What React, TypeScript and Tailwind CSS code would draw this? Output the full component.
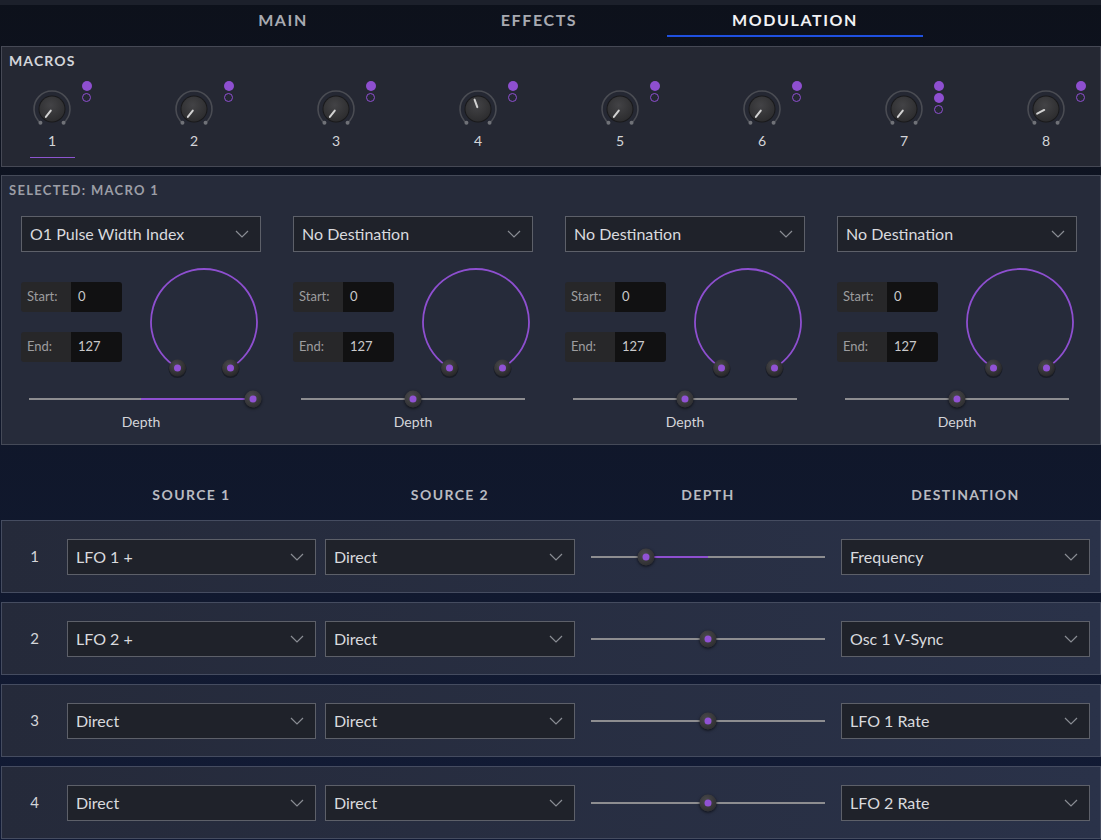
import React from 'react'

const MACRO_ANGLES: number[] = [-142, -142, -142, -20, -142, -142, -142, -118]
const MACRO_FILLED: number[] = [1, 1, 1, 1, 1, 1, 2, 1]

const SELECTED_COLUMNS = [
  { dest: 'O1 Pulse Width Index', depth: 100 },
  { dest: 'No Destination', depth: 50 },
  { dest: 'No Destination', depth: 50 },
  { dest: 'No Destination', depth: 50 },
]

const MOD_ROWS = [
  { src1: 'LFO 1 +', src2: 'Direct', depth: 23.5, dest: 'Frequency' },
  { src1: 'LFO 2 +', src2: 'Direct', depth: 50, dest: 'Osc 1 V-Sync' },
  { src1: 'Direct', src2: 'Direct', depth: 50, dest: 'LFO 1 Rate' },
  { src1: 'Direct', src2: 'Direct', depth: 50, dest: 'LFO 2 Rate' },
]

const polar = (cx: number, cy: number, deg: number, r: number) => {
  const t = (deg * Math.PI) / 180
  return [cx + r * Math.sin(t), cy - r * Math.cos(t)]
}

function Chevron() {
  return (
    <svg width="14" height="8" viewBox="0 0 14 8" fill="none">
      <path d="M1 1l6 6 6-6" stroke="#8a8d94" strokeWidth="1.2" />
    </svg>
  )
}

function Dropdown({ label, className = '' }: { label: string; className?: string }) {
  return (
    <div
      className={`flex h-[36px] shrink-0 items-center justify-between border border-[#5d6069] bg-[#1f222a] pl-[8px] pr-[11px] text-[16px] text-[#d9dade] ${className}`}
    >
      <span>{label}</span>
      <Chevron />
    </div>
  )
}

function MacroKnob({ angle }: { angle: number }) {
  const cx = 23
  const cy = 20
  const [sx, sy] = polar(cx, cy, -140, 18)
  const [ex, ey] = polar(cx, cy, 140, 18)
  const [ax, ay] = polar(cx, cy, angle, 2)
  const [bx, by] = polar(cx, cy, angle, 10)
  return (
    <svg width="46" height="38" viewBox="0 0 46 38">
      <defs>
        <radialGradient id="knobBody" cx="45%" cy="35%" r="70%">
          <stop offset="0%" stopColor="#434346" />
          <stop offset="100%" stopColor="#2b2b2d" />
        </radialGradient>
      </defs>
      <path d={`M${sx} ${sy} A18 18 0 1 1 ${ex} ${ey}`} fill="none" stroke="#4a4c53" strokeWidth="1.6" />
      <circle cx={sx} cy={sy} r="2" fill="#707278" />
      <circle cx={ex} cy={ey} r="2" fill="#707278" />
      <circle cx={cx} cy={cy} r="13.5" fill="#19191b" />
      <circle cx={cx} cy={cy} r="12.5" fill="url(#knobBody)" />
      <line x1={ax} y1={ay} x2={bx} y2={by} stroke="#d2d2d2" strokeWidth="2" strokeLinecap="round" />
    </svg>
  )
}

function Thumb({ left }: { left: string }) {
  return (
    <div
      className="absolute top-1/2 flex h-[17px] w-[17px] -translate-x-1/2 -translate-y-1/2 items-center justify-center rounded-full bg-[radial-gradient(circle_at_40%_35%,#4a4a4d,#262628)] shadow-[0_1px_3px_rgba(0,0,0,0.7)]"
      style={{ left }}
    >
      <div className="h-[7px] w-[7px] rounded-full bg-[#9052d4]" />
    </div>
  )
}

function Slider({ value, className = '' }: { value: number; className?: string }) {
  const lo = Math.min(50, value)
  const hi = Math.max(50, value)
  return (
    <div className={`relative h-[18px] shrink-0 ${className}`}>
      <div className="absolute left-0 right-0 top-[8px] h-[2px] bg-[#8d8d90]" />
      <div className="absolute top-[8px] h-[2px] bg-[#8e4fd0]" style={{ left: `${lo}%`, width: `${hi - lo}%` }} />
      <Thumb left={`${value}%`} />
    </div>
  )
}

function RangeRing() {
  const cx = 56
  const cy = 58
  const [sx, sy] = polar(cx, cy, -150, 53)
  const [ex, ey] = polar(cx, cy, 150, 53)
  const handle = (x: number, y: number) => (
    <g>
      <circle cx={x} cy={y + 1.2} r="9" fill="#000" opacity="0.35" />
      <circle cx={x} cy={y} r="8.5" fill="url(#ringHandle)" />
      <circle cx={x} cy={y} r="3.5" fill="#9052d4" />
    </g>
  )
  return (
    <svg width="112" height="116" viewBox="0 0 112 116" className="ml-[26px] shrink-0">
      <defs>
        <radialGradient id="ringHandle" cx="40%" cy="35%" r="70%">
          <stop offset="0%" stopColor="#4a4a4d" />
          <stop offset="100%" stopColor="#262628" />
        </radialGradient>
      </defs>
      <path d={`M${sx} ${sy} A53 53 0 1 1 ${ex} ${ey}`} fill="none" stroke="#8e4fd0" strokeWidth="1.8" />
      {handle(sx, sy)}
      {handle(ex, ey)}
    </svg>
  )
}

function RangeBox({ label, value }: { label: string; value: string }) {
  return (
    <div className="flex h-[30px] w-[101px] overflow-hidden rounded-[3px] text-[13px]">
      <div className="flex w-[50px] items-center bg-[#272729] pl-[6px] text-[#9d9d9f]">{label}</div>
      <div className="flex flex-1 items-center bg-[#111112] pl-[7px] text-[#c9c9cb]">{value}</div>
    </div>
  )
}

export default function App() {
  return (
    <div className="h-[840px] w-[1101px] overflow-hidden bg-gradient-to-b from-[#0d111b] via-[#10172a] to-[#121b36] font-['Lato',sans-serif]">
      <div className="h-[5px] bg-[#1c202b]" />

      {/* Tabs */}
      <div className="flex h-[32px] pl-[155px] text-[16px] font-bold tracking-[0.1em]">
        <div className="flex w-[256px] items-center justify-center border-b-2 border-transparent text-[#a8aab1]">MAIN</div>
        <div className="flex w-[256px] items-center justify-center border-b-2 border-transparent text-[#a8aab1]">EFFECTS</div>
        <div className="flex w-[256px] items-center justify-center border-b-2 border-[#1f50e0] text-[#f2f2f4]">MODULATION</div>
      </div>

      <div className="mt-[9px] pl-px">
        {/* Macros */}
        <div className="h-[121px] w-[1100px] border border-[#464955] bg-[#252833] pl-[27px] pt-[5px]">
          <div className="-ml-[20px] h-[18px] text-[14px] font-bold leading-[18px] tracking-[0.08em] text-[#d3d5da]">MACROS</div>
          <div className="mt-[10px] flex gap-[79px]">
            {MACRO_ANGLES.map((angle, i) => (
              <div key={i} className="flex items-start">
                <div className="flex w-[46px] flex-col items-center pt-[9px]">
                  <MacroKnob angle={angle} />
                  <div className="mt-[4px] h-[20px] text-[14px] leading-[20px] text-[#d4d5d9]">{i + 1}</div>
                  <div className={`mt-[6px] h-px w-[45px] ${i === 0 ? 'bg-[#8d55d0]' : 'bg-transparent'}`} />
                </div>
                <div className="ml-[6px] flex w-[11px] flex-col items-center gap-[2px] pt-px">
                  {Array.from({ length: MACRO_FILLED[i] }).map((_, j) => (
                    <span key={j} className="h-[10px] w-[10px] rounded-full bg-[#8e4fd0]" />
                  ))}
                  <span className="h-[9px] w-[9px] rounded-full border border-[#8e4fd0]" />
                </div>
              </div>
            ))}
          </div>
        </div>

        {/* Selected macro */}
        <div className="mt-[8px] h-[270px] w-[1100px] border border-[#454a58] bg-[#262b3a] pl-[19px] pt-[5px]">
          <div className="-ml-[12px] h-[18px] text-[13px] font-bold leading-[18px] tracking-[0.1em] text-[#9c9ea6]">SELECTED: MACRO 1</div>
          <div className="mt-[17px] flex gap-[32px]">
            {SELECTED_COLUMNS.map((col, i) => (
              <div key={i} className="w-[240px] shrink-0">
                <Dropdown label={col.dest} />
                <div className="mt-[12px] flex">
                  <div className="flex flex-col gap-[20px] pt-[18px]">
                    <RangeBox label="Start:" value="0" />
                    <RangeBox label="End:" value="127" />
                  </div>
                  <RangeRing />
                </div>
                <Slider value={col.depth} className="mx-[8px] mt-[10px]" />
                <div className="mt-[6px] text-center text-[14px] leading-[16px] text-[#d4d5d9]">Depth</div>
              </div>
            ))}
          </div>
        </div>

        {/* Matrix header */}
        <div className="flex h-[75px] items-end pb-[16px] text-[14px] font-bold leading-[18px] tracking-[0.1em] text-[#b9bbc1]">
          <div className="w-[66px]" />
          <div className="w-[249px] text-center">SOURCE 1</div>
          <div className="ml-[9px] w-[250px] text-center">SOURCE 2</div>
          <div className="ml-[16px] w-[234px] text-center">DEPTH</div>
          <div className="ml-[16px] w-[249px] text-center">DESTINATION</div>
        </div>

        {/* Matrix rows */}
        <div className="flex flex-col gap-[9px]">
          {MOD_ROWS.map((row, i) => (
            <div
              key={i}
              className="flex h-[73px] w-[1100px] items-center border border-[#454c60] bg-gradient-to-r from-[#252a3a] to-[#2a3249]"
            >
              <div className="w-[65px] text-center text-[15px] text-[#d4d5d9]">{i + 1}</div>
              <Dropdown label={row.src1} className="w-[249px]" />
              <Dropdown label={row.src2} className="ml-[9px] w-[250px]" />
              <Slider value={row.depth} className="ml-[16px] w-[234px]" />
              <Dropdown label={row.dest} className="ml-[16px] w-[249px]" />
            </div>
          ))}
        </div>
      </div>
    </div>
  )
}
